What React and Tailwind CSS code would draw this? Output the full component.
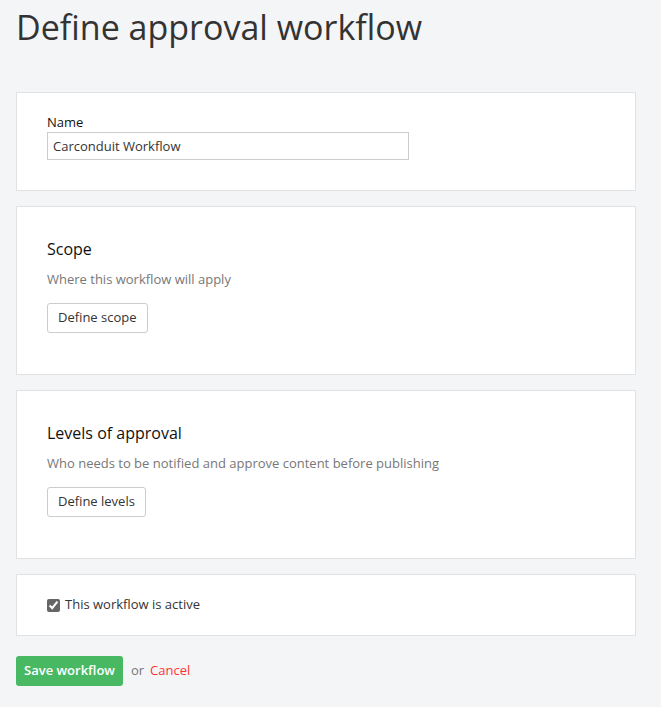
import React from 'react';

const Card = ({ className = '', children }) => (
  <div className={`bg-white border border-[#e1e2e4] ${className}`}>{children}</div>
);

const Section = ({ title, text, action }) => (
  <Card className="h-[169px] px-[30px] pt-[31px]">
    <h2 className="text-[16px] leading-[22px] font-medium text-[#111]">{title}</h2>
    <p className="mt-[10px] text-[13px] leading-[18px] text-[#777]">{text}</p>
    <button className="mt-[15px] h-[30px] px-[10px] bg-white border border-[#ccc] rounded-[3px] text-[13px] text-[#333]">
      {action}
    </button>
  </Card>
);

export default function App() {
  return (
    <div className="min-h-[707px] bg-[#f4f5f7] px-4 pt-[3px] font-['Open_Sans',sans-serif]">
      <h1 className="text-[34px] leading-[48px] text-[#333]">Define approval workflow</h1>

      <div className="w-[620px] mt-[41px] flex flex-col gap-[15px]">
        <Card className="h-[99px] px-[30px] pt-[20px]">
          <label className="block text-[13px] leading-[18px] font-medium text-[#111]">Name</label>
          <input
            readOnly
            value="Carconduit Workflow"
            className="mt-[1px] w-[362px] h-[28px] border border-[#ccc] px-[5px] text-[13px] text-[#333] outline-none"
          />
        </Card>

        <Section title="Scope" text="Where this workflow will apply" action="Define scope" />
        <Section
          title="Levels of approval"
          text="Who needs to be notified and approve content before publishing"
          action="Define levels"
        />

        <Card className="h-[62px] px-[30px] flex items-center">
          <label className="flex items-center gap-[5px] text-[13px] text-[#333]">
            <input type="checkbox" defaultChecked className="w-[13px] h-[13px] m-0 accent-[#666]" />
            This workflow is active
          </label>
        </Card>
      </div>

      <div className="mt-[20px] flex items-center text-[13px]">
        <button className="h-[30px] px-[8px] bg-[#48b863] rounded-[3px] text-white font-semibold">Save workflow</button>
        <span className="ml-[8px] text-[#777]">or</span>
        <a className="ml-[6px] text-[#ff3333] cursor-pointer">Cancel</a>
      </div>
    </div>
  );
}
